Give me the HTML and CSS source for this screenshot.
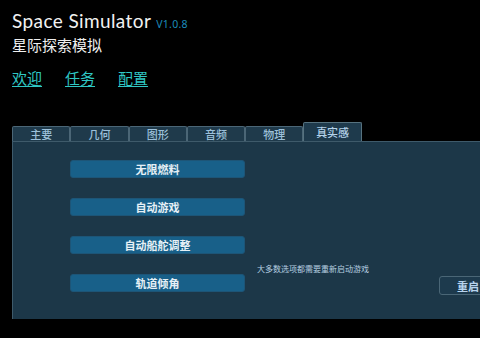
FILE: index.html
```html
<!DOCTYPE html>
<html lang="zh">
<head>
    <meta charset="UTF-8">
    <meta name="viewport" content="width=device-width, initial-scale=1.0">
    <title>Space Simulator</title>
    <link rel="stylesheet" href="styles.css">
</head>
<body>
    <div class="header">
        <div class="title">Space Simulator <span class="version">V1.0.8</span></div>
        <div class="subtitle">星际探索模拟</div>
        <nav class="nav">
            <a href="#">欢迎</a>
            <a href="#">任务</a>
            <a href="#">配置</a>
        </nav>
    </div>
    <div class="tabs">
        <div class="tab">主要</div>
        <div class="tab">几何</div>
        <div class="tab">图形</div>
        <div class="tab">音频</div>
        <div class="tab">物理</div>
        <div class="tab active">真实感</div>
    </div>
    <div class="panel">
        <div class="options">
            <button class="option">无限燃料</button>
            <button class="option">自动游戏</button>
            <button class="option">自动船舵调整</button>
            <button class="option">轨道倾角</button>
        </div>
        <div class="side">
            <div class="note">大多数选项都需要重新启动游戏</div>
            <button class="restart">重启</button>
        </div>
    </div>
</body>
</html>
```

FILE: styles.css
```css
body {
    margin: 0;
    background: #000;
    color: #fff;
    font-family: 'Noto Sans CJK SC', 'Noto Sans', sans-serif;
    overflow: hidden;
    width: 480px;
    height: 338px;
}
.header {
    padding: 9px 0 0 12px;
}
.title {
    font-family: 'Lato', 'Noto Sans', sans-serif;
    font-weight: 400;
    font-size: 19px;
    line-height: 24px;
    letter-spacing: 0.4px;
    color: #f2f2f2;
}
.version {
    font-family: 'Noto Sans', sans-serif;
    font-size: 10.5px;
    color: #1b8cbb;
    letter-spacing: 0.3px;
}
.subtitle {
    font-size: 15px;
    line-height: 18px;
    color: #f0f0f0;
}
.nav {
    display: flex;
    gap: 23px;
    margin-top: 14px;
}
.nav a {
    color: #2fc7c4;
    font-size: 15px;
    line-height: 20px;
    text-decoration: underline;
    text-underline-offset: 2px;
}
.tabs {
    display: flex;
    align-items: flex-end;
    margin: 34px 0 0 12px;
    height: 19px;
}
.tab {
    width: 56.3px;
    height: 14px;
    border: 1px solid #4b6676;
    border-bottom: none;
    border-radius: 2px 2px 0 0;
    background: #1f3a4b;
    color: #9cc0da;
    font-size: 11px;
    font-weight: 500;
    line-height: 15px;
    text-align: center;
}
.tab.active {
    height: 18px;
    line-height: 19px;
    background: #1e3a4c;
    border-color: #56727f;
    color: #b4d2ea;
}
.panel {
    display: flex;
    margin-left: 12px;
    height: 177px;
    background: #1c3748;
    border-left: 1px solid #3e5a6a;
    border-top: 1px solid #3e5a6a;
}
.options {
    display: flex;
    flex-direction: column;
    gap: 20px;
    padding: 18px 0 0 57px;
}
.option {
    width: 175px;
    height: 18px;
    border: 1px solid #1d5577;
    border-radius: 3px;
    background: #186089;
    color: #e6f0f6;
    font-family: 'Noto Sans CJK SC', sans-serif;
    font-size: 11px;
    font-weight: 700;
    padding: 0;
}
.side {
    display: flex;
    flex-direction: column;
    padding: 122px 0 0 12px;
}
.note {
    font-size: 8px;
    line-height: 10px;
    color: #b6cfe0;
}
.restart {
    margin: 2px 0 0 182px;
    width: 60px;
    height: 19px;
    border: 1px solid #4a6676;
    border-radius: 3px;
    background: #1d3a4d;
    color: #b8d4ee;
    font-family: 'Noto Sans CJK SC', sans-serif;
    font-size: 11px;
    font-weight: 700;
    text-align: left;
    padding: 0 0 0 17px;
}
```
